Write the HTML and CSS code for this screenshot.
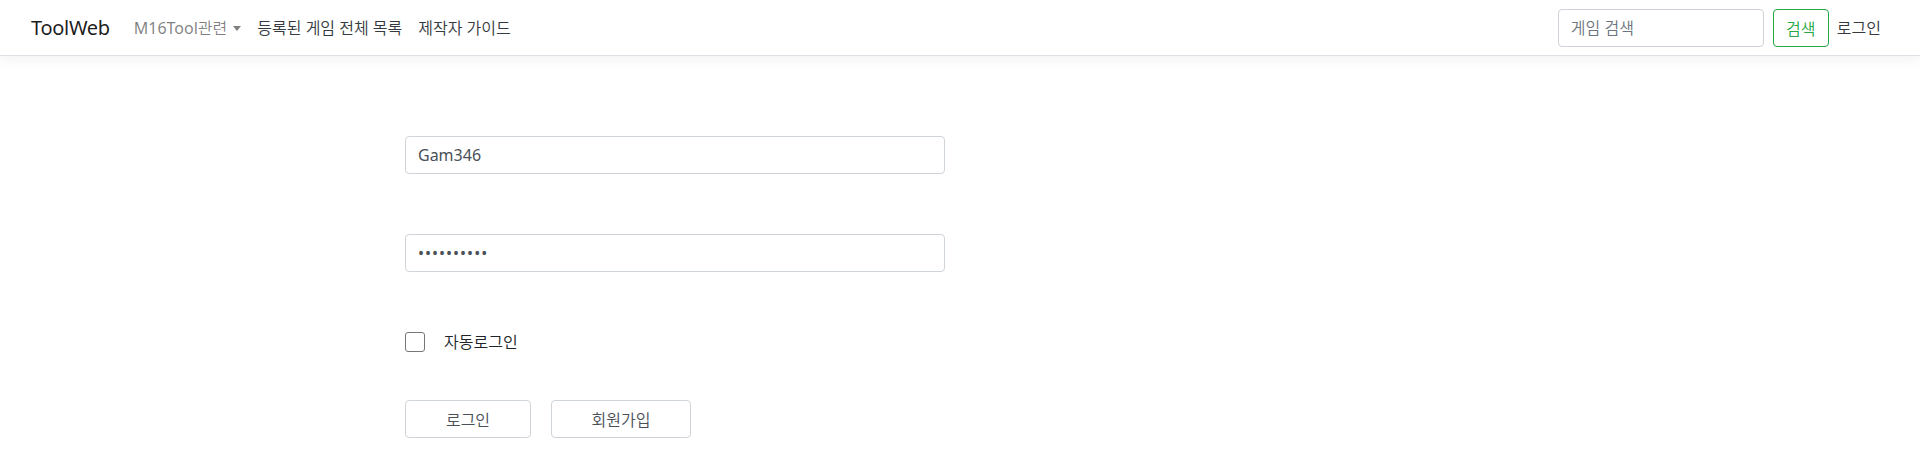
FILE: index.html
```html
<!DOCTYPE html>
<html lang="ko">
<head>
<meta charset="utf-8">
<title>ToolWeb</title>
<link rel="stylesheet" href="styles.css">
</head>
<body>
<header class="navbar">
  <a class="brand" href="#">ToolWeb</a>
  <ul class="nav-left">
    <li class="nav-item"><a class="nav-link muted" href="#">M16Tool<span class="ko">관련</span><span class="caret"></span></a></li>
    <li class="nav-item"><a class="nav-link dark ko" href="#">등록된 게임 전체 목록</a></li>
    <li class="nav-item"><a class="nav-link dark ko" href="#">제작자 가이드</a></li>
  </ul>
  <form class="search-form">
    <input class="search-input ko" type="text" placeholder="게임 검색">
    <button class="btn-search ko" type="button">검색</button>
  </form>
  <a class="nav-link dark ko" href="#">로그인</a>
</header>
<main class="container">
  <div class="col">
    <div class="field"><input class="form-control" type="text" value="Gam346"></div>
    <div class="field"><input class="form-control" type="password" value="abcdefghij"></div>
    <label class="check-row"><input class="checkbox" type="checkbox"><span class="check-label ko">자동로그인</span></label>
    <div class="actions">
      <button class="btn btn-login ko" type="button">로그인</button>
      <button class="btn btn-join ko" type="button">회원가입</button>
    </div>
  </div>
</main>
</body>
</html>
```

FILE: styles.css
```css
* { box-sizing: border-box; }
html, body { margin: 0; padding: 0; }
body {
  font-family: "Noto Sans", "Noto Sans CJK KR", sans-serif;
  font-size: 16px;
  line-height: 1.5;
  color: #212529;
  background: #fff;
}
a { text-decoration: none; }
.ko { font-weight: 350; }

.navbar {
  display: flex;
  align-items: center;
  height: 56px;
  padding: 0 31px;
  border-bottom: 1px solid #dee2e6;
  box-shadow: 0 4px 12px rgba(0,0,0,0.05);
  background: #fff;
}
.brand {
  font-size: 20px;
  color: rgba(0,0,0,0.9);
  margin-right: 16px;
  letter-spacing: -0.3px;
}
.nav-left {
  display: flex;
  list-style: none;
  margin: 0;
  padding: 0;
  flex: 1;
}
.nav-link {
  display: block;
  padding: 8px 8px;
  font-size: 16px;
}
.nav-link.muted { color: rgba(0,0,0,0.5); }
.nav-link.dark { color: #343a40; }
.caret {
  display: inline-block;
  margin-left: 6px;
  vertical-align: 3px;
  border-top: 5px solid rgba(0,0,0,0.5);
  border-left: 4px solid transparent;
  border-right: 4px solid transparent;
}
.search-form {
  display: flex;
  align-items: center;
}
.search-input {
  width: 206px;
  height: 38px;
  padding: 6px 12px;
  font-family: inherit;
  font-size: 16px;
  color: #495057;
  border: 1px solid #ced4da;
  border-radius: 4px;
  margin-right: 9px;
}
.search-input::placeholder { color: #6c757d; }
.btn-search {
  height: 38px;
  width: 56px;
  font-family: inherit;
  font-size: 16px;
  color: #28a745;
  background: #fff;
  border: 1px solid #28a745;
  border-radius: 4px;
  padding: 0;
}

.container {
  width: 1140px;
  margin: 0 auto;
  padding: 80px 15px 0;
}
.col { width: 540px; }
.field { margin-bottom: 60px; }
.form-control {
  display: block;
  width: 100%;
  height: 38px;
  padding: 6px 12px;
  font-family: inherit;
  font-size: 16px;
  color: #495057;
  border: 1px solid #ced4da;
  border-radius: 4px;
  background: #fff;
}
.form-control[type=password] { letter-spacing: 1px; }
.check-row {
  display: flex;
  align-items: center;
  height: 20px;
}
.checkbox {
  appearance: none;
  -webkit-appearance: none;
  width: 20px;
  height: 20px;
  margin: 0;
  border: 1px solid #767676;
  border-radius: 3px;
  background: #fff;
}
.check-label {
  margin-left: 19px;
  font-size: 16px;
  color: #212529;
}
.actions {
  display: flex;
  gap: 20px;
  margin-top: 48px;
}
.btn {
  height: 38px;
  font-family: inherit;
  font-size: 16px;
  color: #495057;
  background: #fff;
  border: 1px solid #ced4da;
  border-radius: 4px;
  padding: 0;
}
.btn-login { width: 126px; }
.btn-join { width: 140px; }
```
